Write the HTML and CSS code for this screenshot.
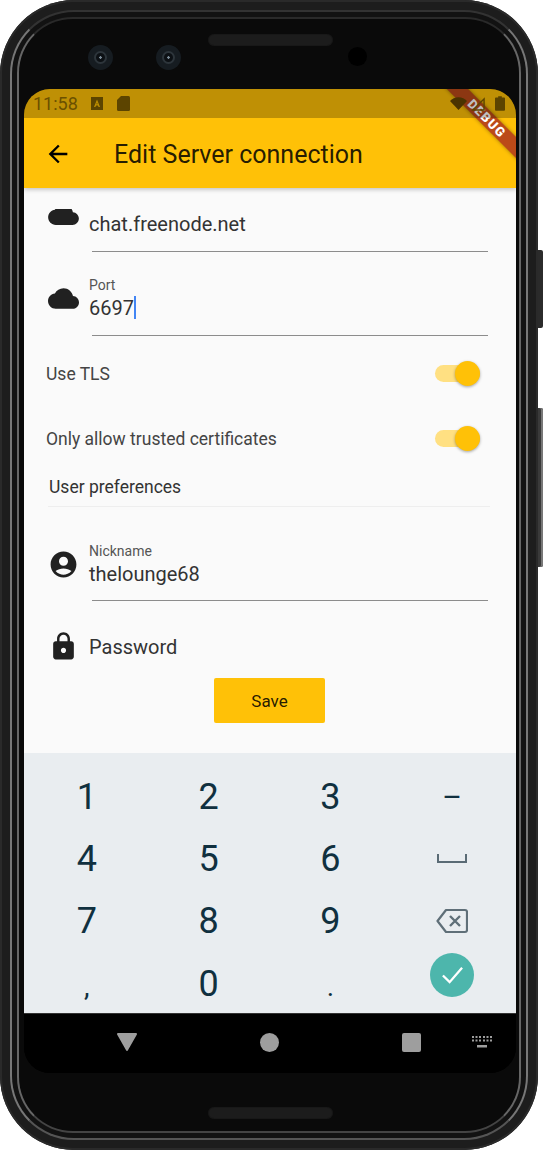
FILE: index.html
```html
<!DOCTYPE html>
<html lang="en">
<head>
    <meta charset="UTF-8">
    <meta name="viewport" content="width=device-width, initial-scale=1.0">
    <title>Edit Server connection</title>
    <link rel="stylesheet" href="styles.css">
</head>
<body>
    <div class="phone">
        <div class="side-btn side-power"></div>
        <div class="side-btn side-volume"></div>
        <div class="ring-outer">
            <div class="ring-inner">
                <div class="head">
                    <div class="camera"><span></span></div>
                    <div class="camera"><span></span></div>
                    <div class="speaker"></div>
                    <div class="front-dot"></div>
                </div>

                <div class="screen">
                    <div class="top">
                        <div class="debug-banner">DEBUG</div>

                        <!-- system bar is see-through and sits over the banner -->
                        <div class="status-bar">
                            <span class="clock">11:58</span>
                            <svg class="status-a" viewBox="0 0 12 13"><path fill="#5c4400" d="M0 0h12v13H0z"/><path fill="#bf9000" d="M6 2.500 9 10H7.600L7 8.400H5L4.400 10H3zM5.400 7.200h1.200L6 5.400z"/></svg>
                            <svg class="status-sd" viewBox="0 0 13 15"><path fill="#5c4400" d="M4 0h7.500A1.500 1.500 0 0 1 13 1.500v12a1.500 1.500 0 0 1-1.500 1.500h-10A1.500 1.500 0 0 1 0 13.500V4z"/></svg>
                            <span class="status-gap"></span>
                            <svg class="status-wifi" viewBox="0 0 20 15"><path fill="#4a3300" d="M0 4.500C2.500 1.700 6 0 10 0s7.500 1.700 10 4.500L10 15z"/></svg>
                            <svg class="status-signal" viewBox="0 0 15 15"><path fill="none" stroke="#5c4400" stroke-width="1.500" d="M14 2v12H2z"/></svg>
                            <svg class="status-battery" viewBox="0 0 11 16"><path fill="#5c4400" d="M3.500 0h4v1.500H10a1 1 0 0 1 1 1V15a1 1 0 0 1-1 1H1a1 1 0 0 1-1-1V2.500a1 1 0 0 1 1-1h2.500z"/></svg>
                        </div>

                        <div class="app-bar">
                            <svg class="back-icon" viewBox="0 0 24 24"><path d="M20 11H7.830l5.590-5.590L12 4l-8 8 8 8 1.410-1.410L7.830 13H20v-2z"/></svg>
                            <span class="app-title">Edit Server connection</span>
                        </div>
                    </div>

                    <div class="content">
                        <div class="field field-host">
                            <svg class="field-icon cloud-cut" viewBox="0 7.500 24 12.500"><path d="M19.350 10.040C18.670 6.590 15.640 4 12 4 9.110 4 6.600 5.640 5.350 8.040 2.340 8.360 0 10.910 0 14c0 3.310 2.690 6 6 6h13c2.760 0 5-2.240 5-5 0-2.640-2.050-4.780-4.650-4.960z"/></svg>
                            <div class="field-text"><div class="value">chat.freenode.net</div></div>
                        </div>
                        <div class="field-line"></div>

                        <div class="field field-port">
                            <svg class="field-icon" viewBox="0 0 24 24"><path d="M19.350 10.040C18.670 6.590 15.640 4 12 4 9.110 4 6.600 5.640 5.350 8.040 2.340 8.360 0 10.910 0 14c0 3.310 2.690 6 6 6h13c2.760 0 5-2.240 5-5 0-2.640-2.050-4.780-4.650-4.960z"/></svg>
                            <div class="field-text">
                                <div class="label">Port</div>
                                <div class="value">6697<span class="caret"></span></div>
                            </div>
                        </div>
                        <div class="field-line"></div>

                        <div class="toggle-row toggle-first">
                            <span>Use TLS</span>
                            <div class="switch"><div class="thumb"></div></div>
                        </div>
                        <div class="toggle-row">
                            <span>Only allow trusted certificates</span>
                            <div class="switch"><div class="thumb"></div></div>
                        </div>

                        <div class="section-title">User preferences</div>

                        <div class="field field-nick">
                            <svg class="field-icon" viewBox="0 0 24 24"><path d="M12 2C6.480 2 2 6.480 2 12s4.480 10 10 10 10-4.480 10-10S17.520 2 12 2zm0 4c1.930 0 3.500 1.570 3.500 3.500S13.930 13 12 13s-3.500-1.570-3.500-3.500S10.070 6 12 6zm0 14c-2.030 0-4.430-.820-6.140-2.880C7.550 15.800 9.680 15 12 15s4.450.800 6.140 2.120C16.430 19.180 14.030 20 12 20z"/></svg>
                            <div class="field-text">
                                <div class="label">Nickname</div>
                                <div class="value">thelounge68</div>
                            </div>
                        </div>
                        <div class="field-line"></div>

                        <div class="field field-pass">
                            <svg class="field-icon" viewBox="0 0 24 24"><path d="M18 8h-1V6c0-2.760-2.240-5-5-5S7 3.240 7 6v2H6c-1.100 0-2 .9-2 2v10c0 1.100.9 2 2 2h12c1.100 0 2-.9 2-2V10c0-1.100-.9-2-2-2zm-6 9c-1.100 0-2-.9-2-2s.9-2 2-2 2 .9 2 2-.9 2-2 2zm3.100-9H8.900V6c0-1.710 1.390-3.100 3.100-3.100 1.710 0 3.100 1.390 3.100 3.100v2z"/></svg>
                            <div class="field-text"><div class="value">Password</div></div>
                        </div>

                        <div class="save-wrap"><button class="save-btn">Save</button></div>
                    </div>

                    <div class="keyboard">
                        <div class="key">1</div>
                        <div class="key">2</div>
                        <div class="key">3</div>
                        <div class="key key-dash">–</div>
                        <div class="key">4</div>
                        <div class="key">5</div>
                        <div class="key">6</div>
                        <div class="key">
                            <svg class="space-icon" viewBox="0 0 30 9"><path fill="none" stroke="#5a6b75" stroke-width="2" d="M1 0v8h28V0"/></svg>
                        </div>
                        <div class="key">7</div>
                        <div class="key">8</div>
                        <div class="key">9</div>
                        <div class="key">
                            <svg class="backspace-icon" viewBox="0 0 32 26"><path fill="none" stroke="#5f6f78" stroke-width="2.200" stroke-linejoin="round" d="M10 2h19a2 2 0 0 1 2 2v18a2 2 0 0 1-2 2H10L1.500 13z"/><path fill="none" stroke="#5f6f78" stroke-width="2.400" d="M14 8l10 10M24 8L14 18"/></svg>
                        </div>
                        <div class="key key-punct">,</div>
                        <div class="key">0</div>
                        <div class="key key-punct">.</div>
                        <div class="key">
                            <div class="done-btn">
                                <svg viewBox="0 0 24 24"><path fill="none" stroke="#fff" stroke-width="2.400" d="M2 13l7 7L22 5"/></svg>
                            </div>
                        </div>
                    </div>

                    <div class="nav-bar">
                        <svg class="nav-back" viewBox="0 0 20 18"><path fill="#9e9e9e" d="M1 0h18a1 1 0 0 1 .9 1.500L10.800 17.500a1 1 0 0 1-1.600 0L.1 1.500A1 1 0 0 1 1 0z"/></svg>
                        <div class="nav-home"></div>
                        <div class="nav-recent"></div>
                        <svg class="nav-keys" viewBox="0 0 20 12"><path fill="#9e9e9e" d="M0 0h2v2H0zM3.500 0h2v2h-2zM7 0h2v2H7zM11 0h2v2h-2zM14.500 0h2v2h-2zM18 0h2v2h-2zM0 3.500h2v2H0zM3.500 3.500h2v2h-2zM7 3.500h2v2H7zM11 3.500h2v2h-2zM14.500 3.500h2v2h-2zM18 3.500h2v2h-2zM5 9h10v2.500H5z"/></svg>
                    </div>
                </div>

                <div class="foot">
                    <div class="speaker"></div>
                </div>
            </div>
        </div>
    </div>
</body>
</html>
```

FILE: styles.css
```css
html, body {
    margin: 0;
    padding: 0;
    background-color: #fff;
}
body {
    font-family: Roboto, "Noto Sans", sans-serif;
    width: 543px;
    height: 1152px;
    overflow: hidden;
}

/* device frame */
.phone {
    position: relative;
    box-sizing: border-box;
    width: 538px;
    height: 1150px;
    padding: 10px;
    border-radius: 74px;
    background-color: #1d1d1d;
    box-shadow: inset 0 0 0 2px #2a2a2a;
}
.ring-outer {
    box-sizing: border-box;
    height: 100%;
    padding: 5px;
    border: 2px solid #777;
    border-top-color: #333;
    border-bottom-color: #555;
    border-radius: 64px;
    background-color: #121212;
}
.ring-inner {
    box-sizing: border-box;
    height: 100%;
    padding: 0 3px 0 5px;
    border: 2px solid #666;
    border-top-color: #2a2a2a;
    border-bottom-color: #444;
    border-radius: 56px;
    background-color: #0a0a0a;
}
.side-btn {
    position: absolute;
    left: 538px;
    width: 5px;
    border-radius: 0 2px 2px 0;
    background-color: #2b2b2b;
}
.side-power {
    top: 250px;
    height: 78px;
}
.side-volume {
    top: 408px;
    height: 159px;
    background-color: #3a3a3a;
    box-shadow: inset -2px 0 0 #777;
}
.head {
    display: flex;
    align-items: flex-start;
    box-sizing: border-box;
    height: 70px;
    padding: 26px 0 0 64px;
}
.camera {
    display: flex;
    align-items: center;
    justify-content: center;
    box-sizing: border-box;
    width: 25px;
    height: 25px;
    margin-top: -0.5px;
    margin-right: 43px;
    border-radius: 50%;
    background-color: #161c21;
}
.camera:nth-child(2) {
    margin-right: 27px;
}
.camera span {
    display: block;
    width: 9px;
    height: 9px;
    border: 2px solid #2d353b;
    border-radius: 50%;
    background: radial-gradient(circle, #7a8a96 0, #7a8a96 1px, #0c1014 1.5px);
}
.speaker {
    width: 125px;
    height: 12px;
    margin-top: -11px;
    border-radius: 6px;
    background-color: #1c1c1c;
    background-image: radial-gradient(#3a3a3a 0.5px, transparent 0.7px);
    background-size: 2px 2px;
    box-shadow: inset 0 0 0 1px #181818;
}
.front-dot {
    width: 19px;
    height: 19px;
    margin-top: 2px;
    margin-left: 15px;
    border-radius: 50%;
    background-color: #000;
}

/* screen */
.screen {
    position: relative;
    width: 492px;
    height: 984px;
    overflow: hidden;
    display: flex;
    flex-direction: column;
    border-radius: 26px;
    background-color: #000;
}
.top {
    position: relative;
    z-index: 2;
    flex: none;
    background-color: #ffc107;
    box-shadow: 0 2px 4px rgba(0, 0, 0, 0.2);
}
.debug-banner {
    position: absolute;
    top: 22px;
    left: 403px;
    z-index: 1;
    width: 120px;
    height: 15px;
    line-height: 15px;
    text-align: center;
    font-size: 13px;
    font-weight: 900;
    letter-spacing: 1.3px;
    color: #fff;
    background-color: #bb4a18;
    box-shadow: 0 0 4px rgba(0, 0, 0, 0.4);
    transform: rotate(45deg);
}
.status-bar {
    position: relative;
    z-index: 2;
    display: flex;
    align-items: center;
    box-sizing: border-box;
    height: 29px;
    padding: 0 11px 0 9px;
    background-color: rgba(0, 0, 0, 0.25);
}
.clock {
    width: 58px;
    font-size: 18px;
    color: #6b5000;
}
.status-a {
    width: 12px;
    height: 13px;
    margin-right: 14px;
}
.status-sd {
    width: 13px;
    height: 15px;
}
.status-gap {
    flex: 1;
}
.status-wifi {
    width: 17px;
    height: 13px;
    margin-right: 4px;
}
.status-signal {
    width: 14px;
    height: 14px;
    margin-right: 10px;
}
.status-battery {
    width: 10px;
    height: 15px;
}
.app-bar {
    display: flex;
    align-items: center;
    box-sizing: border-box;
    height: 70px;
    padding: 2px 0 0 20px;
}
.back-icon {
    width: 28px;
    height: 28px;
    margin-right: 42px;
}
.app-title {
    margin-top: 1px;
    font-size: 25px;
    color: rgba(0, 0, 0, 0.87);
}
.content {
    height: 565px;
    flex: none;
    background-color: #fafafa;
}
.field {
    display: flex;
    align-items: center;
    box-sizing: border-box;
    padding-left: 24px;
}
.field-icon {
    flex: none;
    width: 31px;
    height: 31px;
    margin-right: 10px;
    fill: #212121;
}
.field-text {
    color: #333;
}
.label {
    margin-bottom: 3px;
    font-size: 14px;
    line-height: 16px;
    color: #555;
}
.value {
    font-size: 20px;
    line-height: 24px;
}
.field-line {
    height: 1px;
    margin: 0 28px 0 68px;
    background-color: #8c8c8c;
}
.field-host {
    height: 63px;
    padding-top: 9px;
}
.cloud-cut {
    height: 16px;
    margin-bottom: 15px;
}
.field-port {
    height: 83px;
    padding-top: 10px;
}
.caret {
    display: inline-block;
    width: 2px;
    height: 23px;
    vertical-align: -4px;
    background-color: #4285f4;
}
.toggle-row {
    display: flex;
    align-items: center;
    justify-content: space-between;
    height: 64px;
    padding: 0 36px 0 22px;
    font-size: 17.5px;
    color: #444;
}
.toggle-row span {
    padding-top: 2px;
}
.toggle-first {
    margin-top: 5px;
    margin-bottom: 1px;
}
.switch {
    position: relative;
    width: 45px;
    height: 17px;
    border-radius: 9px;
    background-color: #ffe082;
}
.thumb {
    position: absolute;
    top: -4px;
    right: 0;
    width: 25px;
    height: 25px;
    border-radius: 50%;
    background-color: #ffc107;
    box-shadow: 0 1px 3px rgba(0, 0, 0, 0.35);
}
.section-title {
    box-sizing: border-box;
    height: 37px;
    margin: 0 26px 0 24px;
    padding-left: 1px;
    line-height: 35px;
    font-size: 17.5px;
    color: #333;
    border-bottom: 1px solid #eee;
}
.field-nick {
    height: 93px;
    padding-top: 21px;
}
.field-pass {
    height: 69px;
    padding-top: 22px;
}
.save-wrap {
    display: flex;
    justify-content: center;
    padding-top: 8px;
    padding-right: 1px;
}
.save-btn {
    width: 111px;
    height: 45px;
    padding: 0;
    border: none;
    border-radius: 2px;
    font-family: inherit;
    font-size: 17px;
    color: rgba(0, 0, 0, 0.87);
    background-color: #ffc107;
}

/* keyboard */
.keyboard {
    display: grid;
    grid-template-columns: repeat(4, 1fr);
    grid-auto-rows: 62.3px;
    box-sizing: border-box;
    height: 260px;
    flex: none;
    padding: 12.5px 3px 0 2px;
    overflow: hidden;
    background-color: #e9edf0;
}
.key {
    display: flex;
    align-items: center;
    justify-content: center;
    font-size: 36px;
    color: #10303f;
}
.key-dash {
    font-size: 30px;
}
.key-punct {
    padding-top: 6px;
    font-size: 28px;
}
.space-icon {
    width: 30px;
    height: 9px;
}
.backspace-icon {
    width: 32px;
    height: 26px;
}
.done-btn {
    display: flex;
    align-items: center;
    justify-content: center;
    width: 44px;
    height: 44px;
    margin-bottom: 18px;
    border-radius: 50%;
    background-color: #4db6ac;
}
.done-btn svg {
    width: 23px;
    height: 23px;
}
.nav-bar {
    display: flex;
    flex: none;
    align-items: center;
    box-sizing: border-box;
    height: 60px;
    padding-left: 93px;
    padding-bottom: 3px;
    border-top: 1px solid #333;
    background-color: #000;
}
.nav-back {
    width: 20px;
    height: 18px;
    margin-right: 123px;
}
.nav-home {
    width: 19px;
    height: 19px;
    margin-right: 123px;
    border-radius: 50%;
    background-color: #9e9e9e;
}
.nav-recent {
    width: 19px;
    height: 19px;
    margin-right: 51px;
    border-radius: 2px;
    background-color: #9e9e9e;
}
.nav-keys {
    width: 20px;
    height: 12px;
}
.foot {
    display: flex;
    justify-content: center;
    padding-top: 45px;
}
```
